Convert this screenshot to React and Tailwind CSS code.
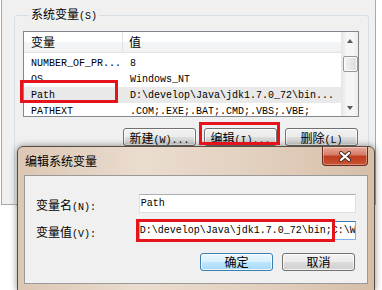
import React from 'react';

const CJK = "font-['Noto_Sans_CJK_SC',sans-serif]";
const MONO = "font-['Liberation_Mono','Noto_Sans_CJK_SC',monospace]";

const Label = ({ zh, hot, suffix = '' }) => (
  <span className="whitespace-nowrap text-black">
    <span className={`${CJK} text-[12px]`}>{zh}</span>
    <span className={`${MONO} text-[10px]`}>({hot}){suffix}</span>
  </span>
);

const WinButton = ({ children, primary, className = '' }) => (
  <div
    className={`flex h-[18px] items-center justify-center rounded-[3px] border leading-none shadow-[inset_0_0_0_1px_rgba(255,255,255,0.75)] ${
      primary
        ? 'border-[#3c7fb1] bg-[linear-gradient(#eaf6fd_0%,#d9f0fc_50%,#bee6fd_50%,#a7d9f5_100%)]'
        : 'border-[#707070] bg-[linear-gradient(#f2f2f2_0%,#ebebeb_50%,#dddddd_50%,#cfcfcf_100%)]'
    } ${className}`}
  >
    {children}
  </div>
);

const rows = [
  ['NUMBER_OF_PR...', '8'],
  ['OS', 'Windows_NT'],
  ['Path', 'D:\\develop\\Java\\jdk1.7.0_72\\bin...'],
  ['PATHEXT', '.COM;.EXE;.BAT;.CMD;.VBS;.VBE;'],
];

const App = () => {
  return (
    <div className="relative h-[290px] w-[382px] overflow-hidden bg-white">
      {/* 后面的环境变量窗口 */}
      <div className="ml-[1px] h-[205px] w-[375px] border-x border-b border-[#a9a9a9] bg-[#f0f0f0] pl-[12px] pt-[6px]">
        <fieldset className="h-[200px] w-[355px] rounded-[3px] border border-[#d5dfe5] pl-[8px]">
          <legend className="ml-[6px] px-[2px] leading-[14px]">
            <Label zh="系统变量" hot="S" />
          </legend>

          <div className="mt-[7px] flex h-[86px] w-[336px] overflow-hidden border border-[#828790] bg-white">
            <div className="min-w-0 flex-1 overflow-hidden">
              <div className="flex h-[21px] items-center border-b border-[#e3e4e6] bg-[linear-gradient(#ffffff_0%,#ffffff_50%,#f3f4f6_50%,#f1f2f4_100%)]">
                <div className={`${CJK} flex h-full w-[99px] items-center border-r border-[#e3e4e6] pl-[7px] text-[12px] text-black`}>变量</div>
                <div className={`${CJK} pl-[6px] text-[12px] text-black`}>值</div>
              </div>
              <div className="mt-[2px]">
                {rows.map(([name, value]) => (
                  <div
                    key={name}
                    className={`flex h-[16px] items-center whitespace-nowrap ${MONO} text-[10px] text-black ${
                      name === 'Path' ? 'bg-[#e9e9e9]' : ''
                    }`}
                  >
                    <div className="w-[99px] pl-[7px]">{name}</div>
                    <div className="pl-[7px]">{value}</div>
                  </div>
                ))}
              </div>
            </div>

            {/* 滚动条 */}
            <div className="flex w-[17px] flex-col items-center border-l border-[#e6e6e6] bg-[linear-gradient(90deg,#e8e8e8,#f6f6f6_30%,#f6f6f6_70%,#ececec)]">
              <div className="flex h-[17px] items-center justify-center">
                <div className="h-0 w-0 border-x-[3px] border-b-[4px] border-x-transparent border-b-[#5a5a5a]" />
              </div>
              <div className="mt-[7px] h-[16px] w-[15px] rounded-[2px] border border-[#979797] bg-[linear-gradient(90deg,#f3f3f3,#e8e8e8_50%,#dadada)] shadow-[inset_0_0_0_1px_rgba(255,255,255,0.8)]" />
              <div className="flex-1" />
              <div className="flex h-[17px] items-center justify-center">
                <div className="h-0 w-0 border-x-[3px] border-t-[4px] border-x-transparent border-t-[#5a5a5a]" />
              </div>
            </div>
          </div>

          <div className="mt-[11px] flex justify-end gap-[8px] pr-[10px]">
            <WinButton className="w-[73px]"><Label zh="新建" hot="W" suffix="..." /></WinButton>
            <WinButton className="w-[73px]"><Label zh="编辑" hot="I" suffix="..." /></WinButton>
            <WinButton className="w-[73px]"><Label zh="删除" hot="L" /></WinButton>
          </div>
        </fieldset>
      </div>

      {/* 编辑系统变量 对话框 */}
      <div className="absolute left-[17px] top-[146px] w-[358px] rounded-t-[6px] border border-[#5b4c40] bg-[linear-gradient(90deg,#dcc7b4,#eadccf_35%,#e3d1c0_65%,#d6bea8)] pb-[6px] shadow-[0_0_7px_rgba(0,0,0,0.45)]">
        <div className="flex h-[28px] items-start justify-between">
          <div className={`${CJK} pl-[7px] pt-[6px] text-[12px] leading-[16px] text-black`}>编辑系统变量</div>
          <div className="mr-[6px] flex h-[19px] w-[46px] items-center justify-center rounded-b-[4px] border border-t-0 border-[#6a2a1e] bg-[linear-gradient(#e9a99a_0%,#d47a64_45%,#c03c1f_50%,#c9522f_100%)] shadow-[inset_0_0_0_1px_rgba(255,255,255,0.35)]">
            <svg width="14" height="11" viewBox="0 0 14 11">
              <path d="M3 2 L11 9 M11 2 L3 9" stroke="#4a2a24" strokeWidth="4" strokeLinecap="round" />
              <path d="M3 2 L11 9 M11 2 L3 9" stroke="#ffffff" strokeWidth="2.2" strokeLinecap="round" />
            </svg>
          </div>
        </div>

        <div className="mx-[6px] h-[109px] border border-[#9a9a9a] bg-[#f0f0f0] pl-[11px] pr-[11px] pt-[18px]">
          <div className="flex h-[19px] items-center">
            <div className="w-[103px]"><Label zh="变量名" hot="N" suffix=":" /></div>
            <div className={`${MONO} flex h-[19px] w-[218px] items-center border border-[#dbdfe6] border-t-[#abadb3] bg-white pl-[1px] text-[10px] text-black`}>
              Path
            </div>
          </div>
          <div className="mt-[8px] flex h-[19px] items-center">
            <div className="w-[103px]"><Label zh="变量值" hot="V" suffix=":" /></div>
            <div className={`${MONO} flex h-[19px] w-[218px] items-center overflow-hidden whitespace-nowrap border border-[#7eb4ea] border-t-[#3d7bad] bg-white pl-[1px] text-[10px] text-black`}>
              <span className="-mr-px inline-block h-[12px] w-px bg-black" />
              D:\develop\Java\jdk1.7.0_72\bin;C:\Windows\system32
            </div>
          </div>
          <div className="mt-[13px] flex justify-end gap-[9px] pr-[1px]">
            <WinButton primary className="w-[73px]"><span className={`${CJK} text-[12px]`}>确定</span></WinButton>
            <WinButton className="w-[73px]"><span className={`${CJK} text-[12px]`}>取消</span></WinButton>
          </div>
        </div>
      </div>

      {/* 红色标注框 */}
      <div className="absolute left-[20px] top-[80px] h-[23px] w-[98px] border-[3px] border-[#e5141c]" />
      <div className="absolute left-[199px] top-[122px] h-[23px] w-[81px] border-[3px] border-[#e5141c]" />
      <div className="absolute left-[136px] top-[219px] h-[23px] w-[199px] border-[3px] border-[#e5141c]" />
    </div>
  );
};

export default App;
